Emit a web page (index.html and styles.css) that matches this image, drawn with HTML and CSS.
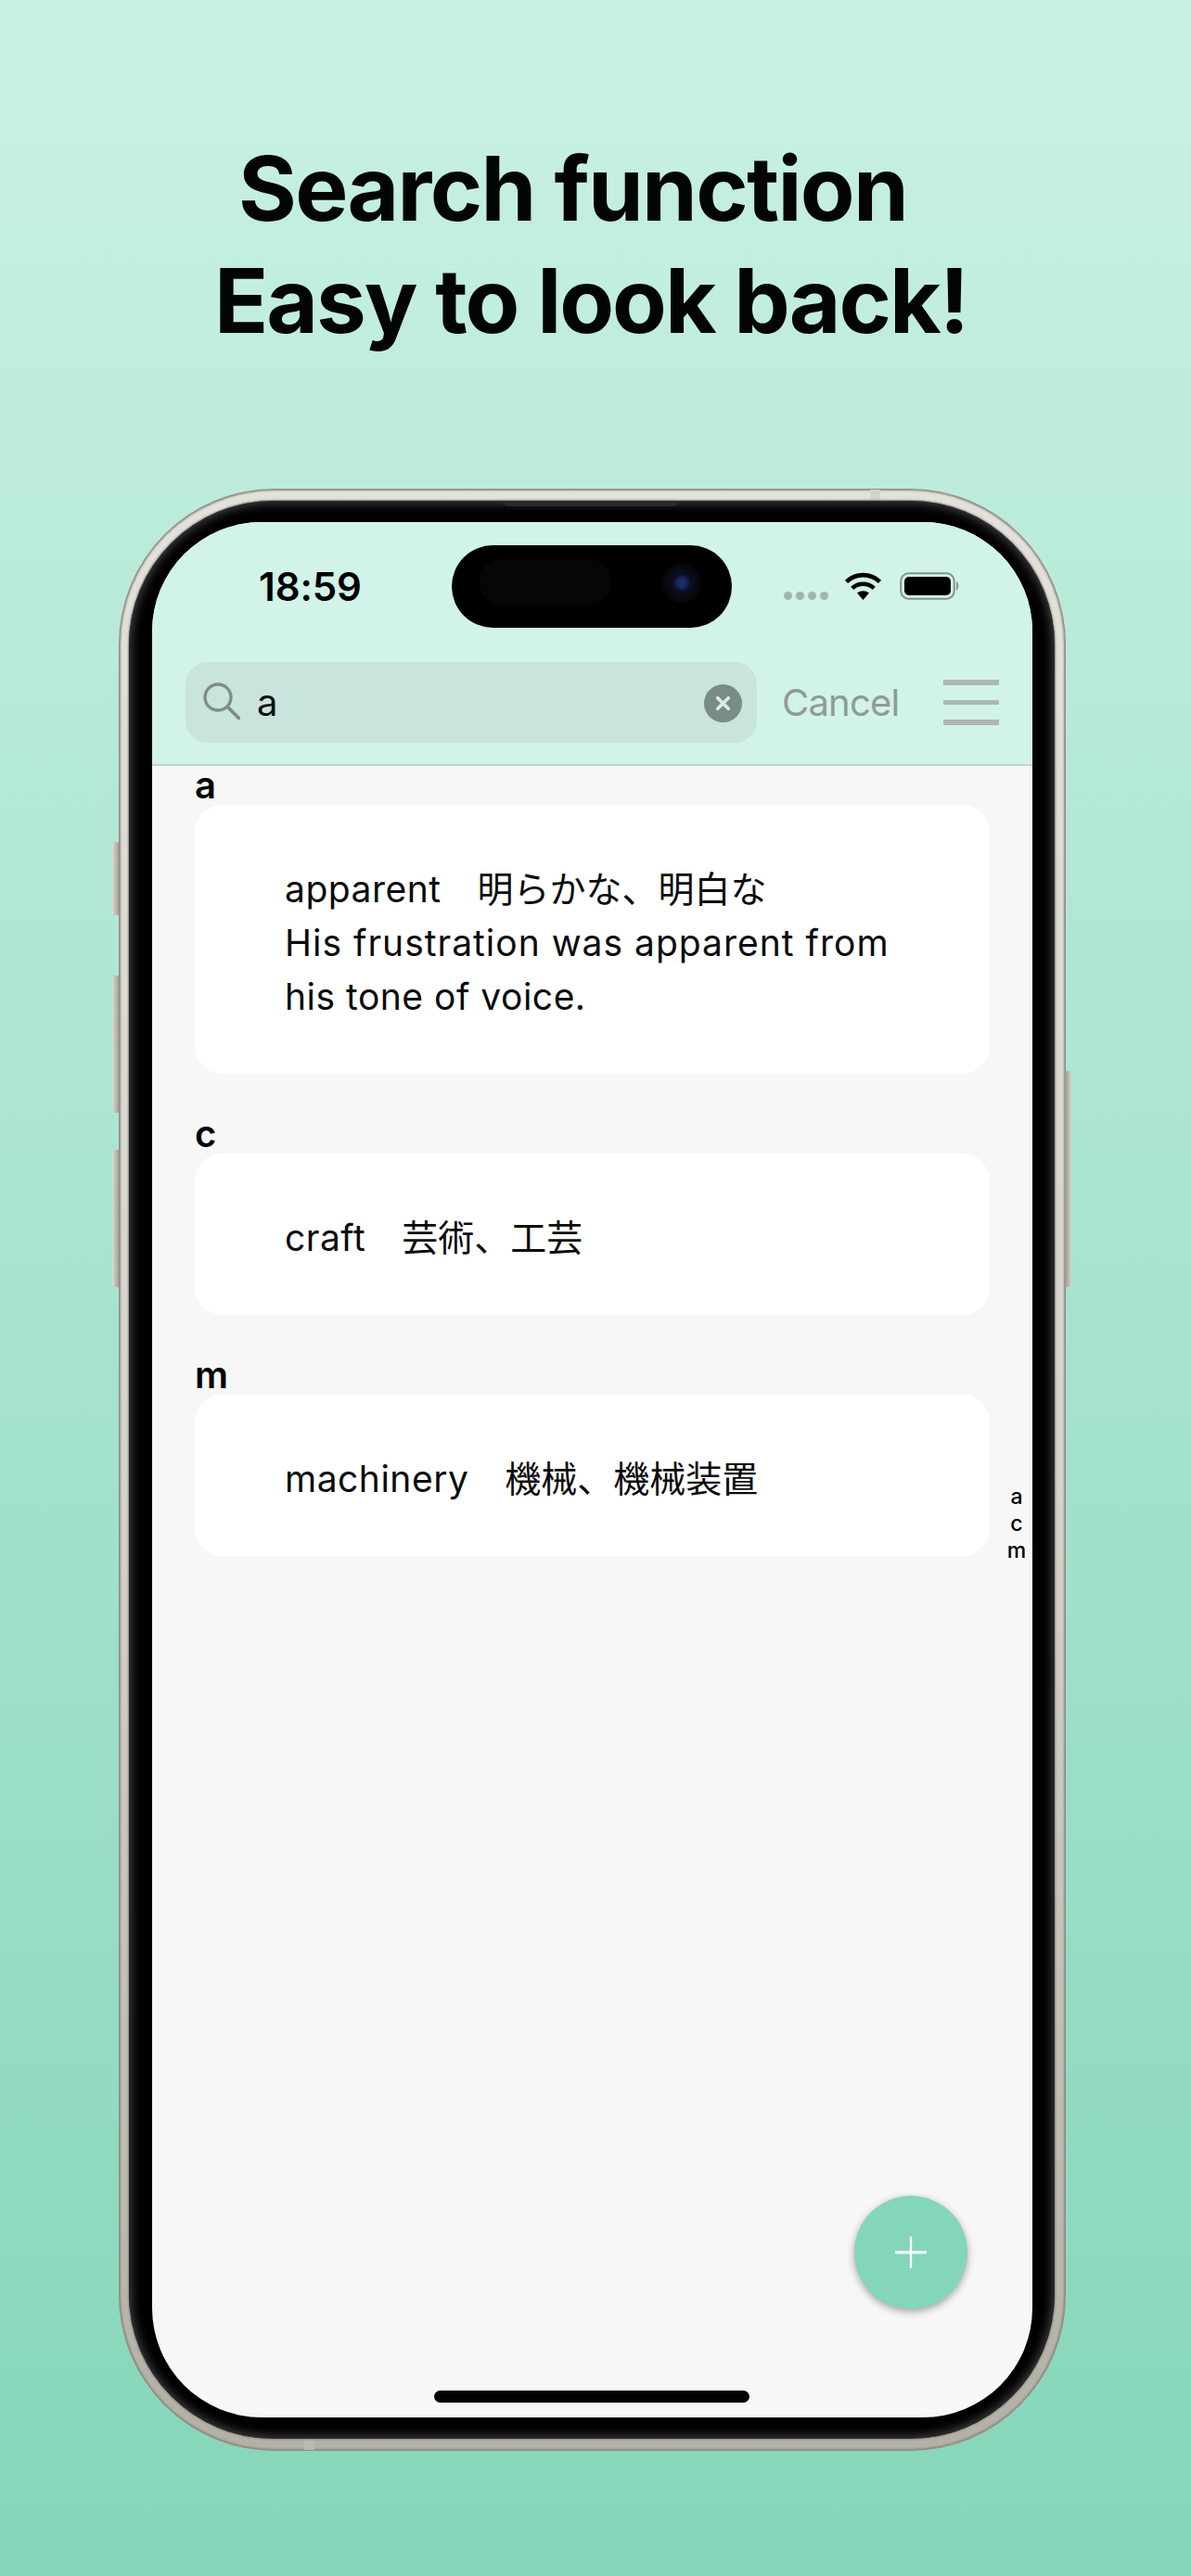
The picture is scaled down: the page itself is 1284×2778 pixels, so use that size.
FILE: index.html
```html
<!DOCTYPE html>
<html lang="en">
<head>
<meta charset="utf-8">
<title>Search function</title>
<link rel="stylesheet" href="styles.css">
</head>
<body>
<main class="poster">
  <h1 class="headline">
    <span class="headline-line first">Search function</span>
    <span class="headline-line second">Easy to look back!</span>
  </h1>
  <div class="phone">
    <span class="side-btn btn-action"></span>
    <span class="side-btn btn-up"></span>
    <span class="side-btn btn-down"></span>
    <span class="side-btn btn-power"></span>
    <span class="seam seam-top"></span>
    <span class="seam seam-bottom"></span>
    <div class="bezel">
      <span class="speaker"></span>
      <div class="screen">
        <header class="top">
          <div class="status">
            <span class="time">18:59</span>
            <div class="island">
              <span class="island-patch"></span>
              <span class="island-cam"></span>
            </div>
            <div class="status-icons">
              <span class="dots"><i></i><i></i><i></i><i></i></span>
              <svg class="wifi" viewBox="0 0 42 30" aria-hidden="true">
                <path d="M21 30 L14.5 22.6 A10 10 0 0 1 27.5 22.6 Z" fill="#000"/>
                <path d="M9.2 17.4 A17.5 17.5 0 0 1 32.8 17.4" fill="none" stroke="#000" stroke-width="4.6"/>
                <path d="M3 10.4 A26 26 0 0 1 39 10.4" fill="none" stroke="#000" stroke-width="4.6"/>
              </svg>
              <svg class="battery" viewBox="0 0 64 30" aria-hidden="true">
                <rect x="1.2" y="1.2" width="57.6" height="27.6" rx="8.5" fill="none" stroke="#83938e" stroke-width="2"/>
                <rect x="5" y="5" width="50" height="20" rx="5" fill="#000"/>
                <path d="M61 10 C64 11 64 19 61 20 Z" fill="#83938e"/>
              </svg>
            </div>
          </div>
          <div class="searchbar">
            <div class="field">
              <svg class="glass" viewBox="0 0 40 40" aria-hidden="true">
                <circle cx="16" cy="16" r="14" fill="none" stroke="#7f8d89" stroke-width="3.4"/>
                <path d="M26.5 26.5 L38.5 38.5" stroke="#7f8d89" stroke-width="3.8" stroke-linecap="round"/>
              </svg>
              <span class="query">a</span>
              <span class="clear">
                <svg viewBox="0 0 20 20" aria-hidden="true">
                  <path d="M5 5 L15 15 M15 5 L5 15" stroke="#dcebe6" stroke-width="3.2" stroke-linecap="round"/>
                </svg>
              </span>
            </div>
            <span class="cancel">Cancel</span>
            <div class="burger"><i></i><i></i><i></i></div>
          </div>
        </header>
        <section class="list">
          <h2 class="letter">a</h2>
          <article class="card"><p>apparent<span class="ja">　明らかな、明白な</span><br><span class="sentence">His frustration was apparent from</span><br>his tone of voice.</p></article>
          <h2 class="letter">c</h2>
          <article class="card"><p>craft<span class="ja">　芸術、工芸</span></p></article>
          <h2 class="letter">m</h2>
          <article class="card"><p>machinery<span class="ja">　機械、機械装置</span></p></article>
        </section>
        <nav class="index"><span>a</span><span>c</span><span>m</span></nav>
        <button class="fab" type="button">
          <svg viewBox="0 0 34 34" aria-hidden="true">
            <path d="M17 0 V34" stroke="#fff" stroke-width="2.4"/>
            <path d="M0 17 H34" stroke="#fff" stroke-width="3"/>
          </svg>
        </button>
        <span class="home"></span>
      </div>
    </div>
  </div>
</main>
</body>
</html>
```
FILE: styles.css
```css
* { box-sizing: border-box; }
html, body { margin: 0; padding: 0; }
body { width: 1284px; height: 2778px; overflow: hidden; font-family: Inter, "Noto Sans CJK JP", sans-serif; color: #000; }

.poster {
  width: 1284px;
  height: 2778px;
  padding-top: 143px;
  background: linear-gradient(180deg, #c9f1e3 0%, #85d6b8 100%);
}

.headline {
  margin: 0;
  height: 384px;
  font-family: Inter, "Liberation Sans", sans-serif;
  font-size: 96px;
  font-weight: 700;
  line-height: 121px;
  letter-spacing: -1.8px;
  color: #030504;
}
.headline-line { display: block; white-space: nowrap; }
.headline-line.first { margin-left: 257px; letter-spacing: -1.7px; }
.headline-line.second { margin-left: 231px; letter-spacing: -2px; }

.phone {
  position: relative;
  width: 1021px;
  height: 2116px;
  margin-left: 128px;
  padding: 13px 12px 13px 11px;
  border-radius: 168px;
  background: linear-gradient(180deg, #e4e1da 0%, #d6d3cb 50%, #b3b0a6 100%);
  box-shadow: inset 0 0 2px 2px #8d8a83;
}
.seam { position: absolute; width: 11px; height: 13px; background: #d6d3cb; }
.seam-top { left: 810px; top: 1px; }
.seam-bottom { left: 200px; bottom: 1px; background: #bcb9af; }
.side-btn {
  position: absolute;
  width: 7px;
  background: linear-gradient(90deg, #dedbd4, #a3a09a);
  border-radius: 3px 0 0 3px;
}
.btn-action { left: -7px; top: 381px; height: 79px; }
.btn-up { left: -7px; top: 525px; height: 148px; }
.btn-down { left: -7px; top: 713px; height: 148px; }
.btn-power { right: -6px; top: 628px; height: 233px; border-radius: 0 3px 3px 0; background: linear-gradient(90deg, #9a9791, #d5d2cb); }

.bezel {
  position: relative;
  width: 100%;
  height: 100%;
  padding: 23px 24px 23px 25px;
  border-radius: 156px;
  background: #000;
  box-shadow: 0 0 2px 1px #8a8780, inset 0 0 12px 2px #484848;
}
.speaker {
  position: absolute;
  top: 0;
  left: 403px;
  width: 190px;
  height: 6px;
  background: #2a2a2a;
  border-radius: 0 0 6px 6px;
}

.screen {
  position: relative;
  height: 100%;
  border-radius: 118px;
  overflow: hidden;
  background: #f7f7f7;
}

.top {
  height: 263px;
  background: #d1f3e8;
  border-bottom: 2px solid #bdd5cd;
}
.status {
  position: relative;
  height: 151px;
}
.time {
  position: absolute;
  left: 115px;
  top: 45px;
  font-family: Inter, "Liberation Sans", sans-serif;
  font-size: 42px;
  font-weight: 600;
  line-height: 50px;
  letter-spacing: -0.1px;
}
.island {
  position: absolute;
  left: 323px;
  top: 25px;
  width: 302px;
  height: 89px;
  background: #000;
  border-radius: 45px;
}
.island-patch {
  position: absolute;
  left: 30px;
  top: 15px;
  width: 141px;
  height: 49px;
  border-radius: 22px;
  background: #060606;
}
.island-cam {
  position: absolute;
  left: 227px;
  top: 19px;
  width: 42px;
  height: 43px;
  border-radius: 50%;
  background: radial-gradient(circle, #1b2a6b 0 14%, #0b0f22 32%, #07070c 62%, #030303 100%);
}
.status-icons { position: absolute; left: 681px; top: 54px; width: 190px; height: 30px; }
.dots { position: absolute; left: 0; top: 21px; display: flex; gap: 4px; }
.dots i { width: 9px; height: 9px; border-radius: 50%; background: #a3b4ae; }
.wifi { position: absolute; left: 64px; top: 0; width: 43px; height: 30px; }
.battery { position: absolute; left: 125px; top: 0; width: 64px; height: 30px; }

.searchbar {
  display: flex;
  align-items: center;
  height: 87px;
  padding-left: 36px;
}
.field {
  display: flex;
  align-items: center;
  width: 616px;
  height: 87px;
  padding: 0 16px 0 19px;
  border-radius: 24px;
  background: #c9e4dc;
}
.glass { width: 40px; height: 40px; margin-top: -4px; }
.query { margin-left: 18px; font-size: 40px; line-height: 50px; color: #0b0d0c; flex: 1; }
.clear {
  display: flex;
  width: 41px;
  height: 41px;
  margin-top: 2px;
  border-radius: 50%;
  background: #7a8c88;
}
.clear svg { width: 41px; height: 41px; padding: 9px; }
.cancel {
  margin-left: 27px;
  width: 128px;
  font-size: 40px;
  line-height: 50px;
  letter-spacing: -0.8px;
  color: #8f9b98;
  white-space: nowrap;
}
.burger {
  display: flex;
  flex-direction: column;
  gap: 16px;
  width: 60px;
  margin-left: 46px;
}
.burger i { display: block; height: 5.5px; background: #adb7b4; }

.list { padding: 0 46px; }
.letter {
  margin: 44px 0 0;
  height: 42px;
  font-size: 40px;
  font-weight: 600;
  line-height: 42px;
}
.letter:first-child { margin-top: 0; }
.card {
  margin: 0;
  padding: 62px 40px 54px 97px;
  border-radius: 30px;
  background: #fff;
}
.card p {
  margin: 0;
  font-size: 39px;
  line-height: 58px;
  letter-spacing: 0.5px;
  color: #0c0c0c;
  white-space: nowrap;
}
.ja { letter-spacing: 0; }
.sentence { letter-spacing: 1px; }

.index {
  position: absolute;
  right: 5px;
  top: 1037px;
  width: 24px;
  display: flex;
  flex-direction: column;
  align-items: center;
  font-size: 23px;
  font-weight: 500;
  line-height: 29px;
}

.fab {
  position: absolute;
  left: 757px;
  top: 1805px;
  display: flex;
  align-items: center;
  justify-content: center;
  width: 122px;
  height: 122px;
  padding: 0;
  border: 0;
  border-radius: 50%;
  background: #84d6b9;
  box-shadow: 0 3px 8px rgba(0, 0, 0, 0.35);
}
.fab svg { width: 34px; height: 34px; }

.home {
  position: absolute;
  left: 304px;
  top: 2015px;
  width: 340px;
  height: 13px;
  border-radius: 7px;
  background: #000;
}
```
